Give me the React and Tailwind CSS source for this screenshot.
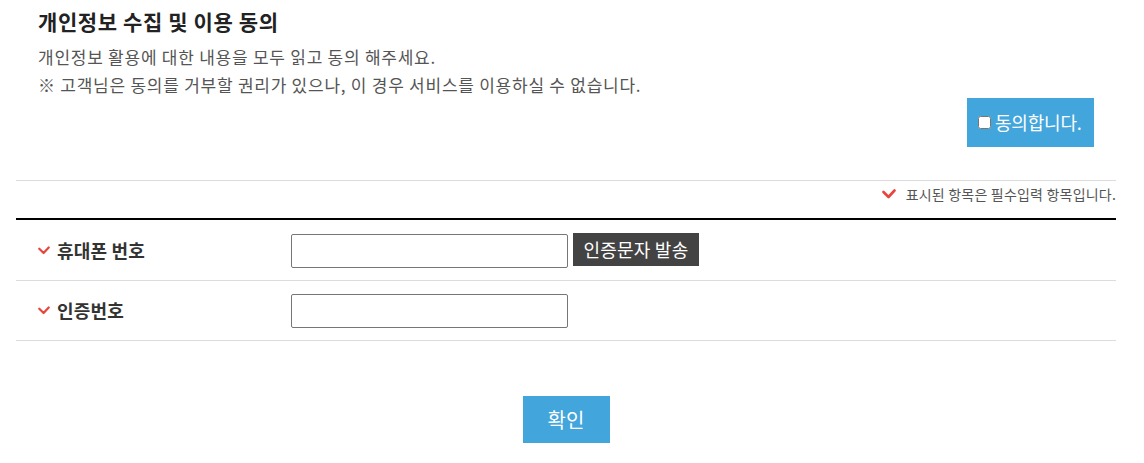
import React from "react";

const FONT = { fontFamily: '"Malgun Gothic", "Noto Sans CJK KR", "Noto Sans", sans-serif' };

function Check({ className = "" }) {
  return (
    <svg viewBox="0 0 14 10" className={className} fill="none">
      <polyline points="1.5,3 6.5,8 12.5,1.5" stroke="#e8453c" strokeWidth="2.6" strokeLinecap="round" strokeLinejoin="round" />
    </svg>
  );
}

export default function App() {
  return (
    <div className="w-[1144px] h-[463px] bg-white text-[#333]" style={FONT}>
      <div className="ml-4 w-[1100px]">
        <div className="pl-[22px] pr-[22px] pt-[6px]">
          <h2 className="text-[21px] leading-[30px] font-bold text-[#222] tracking-[0.6px]">개인정보 수집 및 이용 동의</h2>
          <p className="mt-[7px] text-[17px] leading-[28px] text-[#555] tracking-[0.75px]">개인정보 활용에 대한 내용을 모두 읽고 동의 해주세요.</p>
          <p className="text-[17px] leading-[28px] text-[#555] tracking-[0.75px]">※ 고객님은 동의를 거부할 권리가 있으나, 이 경우 서비스를 이용하실 수 없습니다.</p>
          <div className="flex justify-end mt-[-1px]">
            <label className="flex items-center gap-[4px] w-[127px] h-[49px] bg-[#42a5dc] pl-[11px] text-white text-[18px] tracking-[-0.2px]">
              <input type="checkbox" className="w-[13px] h-[13px] m-0" />
              <span>동의합니다.</span>
            </label>
          </div>
        </div>
        <div className="mt-[33px] border-t border-[#dcdcdc] flex justify-end items-center h-[27px] gap-[10px] text-[14px] text-[#555] tracking-[0.2px]">
          <Check className="w-[14px] h-[10px]" />
          <span>표시된 항목은 필수입력 항목입니다.</span>
        </div>
        <div className="border-t-2 border-black mt-[11px]">
          <div className="flex items-center h-[61px] border-b border-[#dcdcdc]">
            <div className="w-[275px] pl-[22px] flex items-center gap-[7px]">
              <Check className="w-[12px] h-[9px]" />
              <span className="text-[18px] font-bold text-[#333] tracking-[0.2px]">휴대폰 번호</span>
            </div>
            <input type="text" className="w-[277px] h-[34px] mt-[2px] border border-[#767676] rounded-[2px] outline-none" />
            <button className="ml-[5px] w-[126px] h-[33px] bg-[#434343] text-white text-[18px] tracking-[0.2px] -mt-[2px]">인증문자 발송</button>
          </div>
          <div className="flex items-center h-[60px] border-b border-[#dcdcdc]">
            <div className="w-[275px] pl-[22px] flex items-center gap-[7px]">
              <Check className="w-[12px] h-[9px]" />
              <span className="text-[18px] font-bold text-[#333] tracking-[0.2px]">인증번호</span>
            </div>
            <input type="text" className="w-[277px] h-[34px] border border-[#767676] rounded-[2px] outline-none" />
          </div>
        </div>
        <div className="flex justify-center mt-[55px]">
          <button className="w-[87px] h-[47px] bg-[#42a5dc] text-white text-[20px]">확인</button>
        </div>
      </div>
    </div>
  );
}
